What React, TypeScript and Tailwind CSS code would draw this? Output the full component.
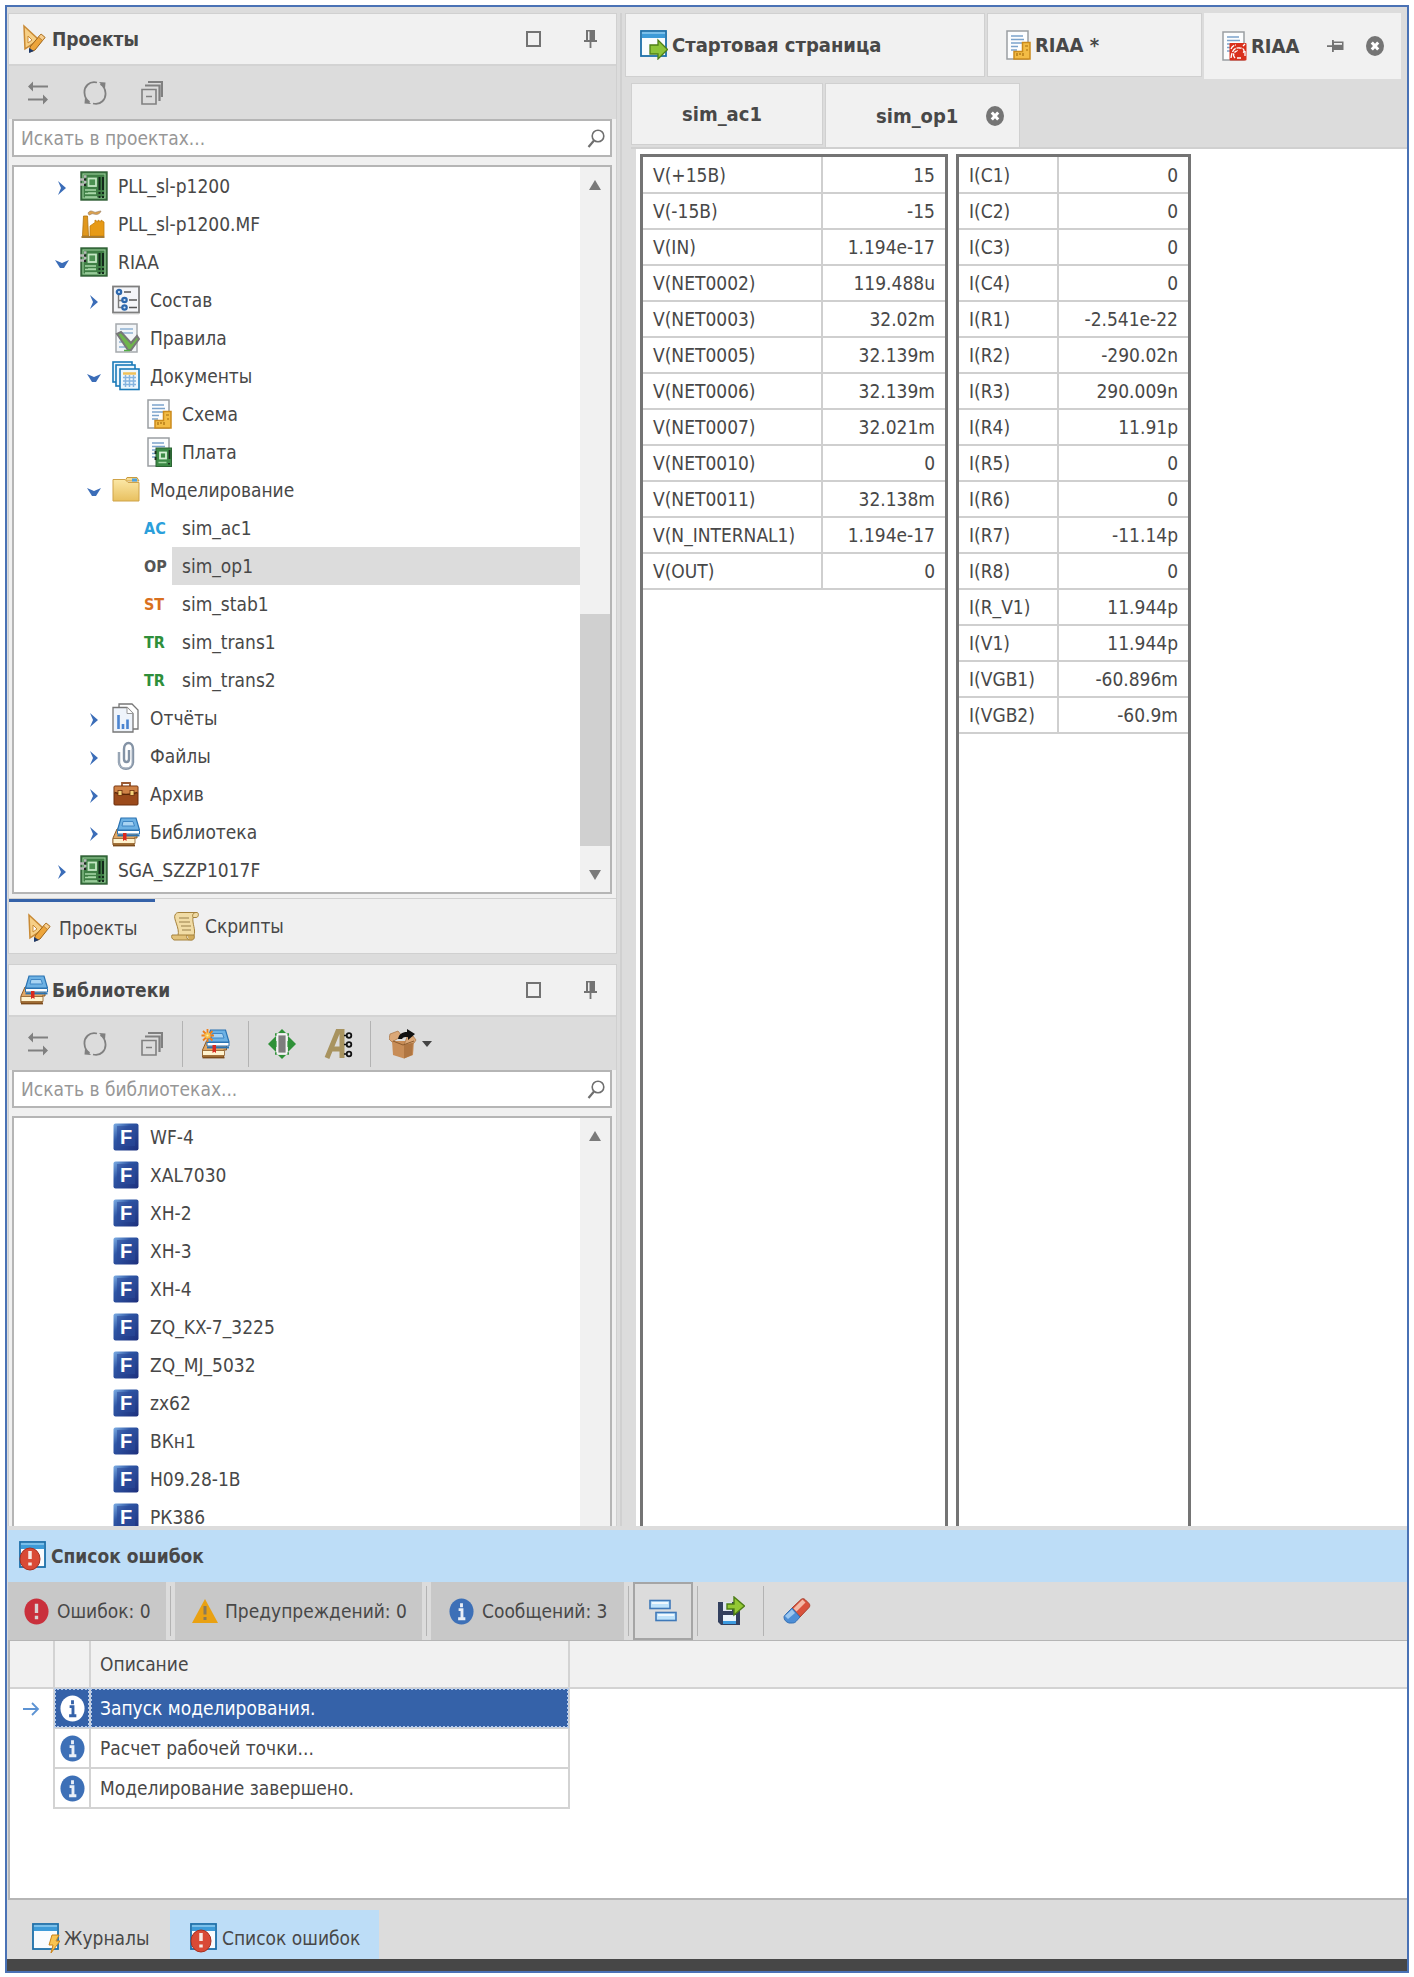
import { useState } from 'react';
import type { ReactNode } from 'react';

type IconProps = { className?: string };

/* ---------- ICONS ---------- */

const BoardIcon = ({ className = 'h-[30px] w-7' }: IconProps) => (
  <svg viewBox="0 0 28 30" className={className} aria-hidden="true">
    <rect x="1" y="1" width="26" height="28" fill="#3f7f45" stroke="#2f5f35" strokeWidth="1.4" />
    <rect x="3" y="3" width="22" height="24" fill="none" stroke="#9fd0a0" strokeWidth="1" />
    <rect x="8.5" y="7.5" width="7.5" height="7.5" fill="#4c9152" stroke="#c4e6c4" strokeWidth="1.8" />
    <path d="M19.5 6v13M23 6v13" stroke="#12281a" strokeWidth="2" />
    <path d="M5 19h11M5 22.5h11M5 26h12M8 22h8" stroke="#a8d8a8" strokeWidth="1.3" />
    <path d="M18.5 22h2M22 22h2M18.5 26h2M22 26h2" stroke="#12281a" strokeWidth="2" />
    <path d="M0 8.5h4.5M0 13.5h4.5M4 5.5h2.500M4 11h2.500" stroke="#b9b9b9" strokeWidth="2.4" />
    <path d="M4 8.500h2M4 14h2" stroke="#222" strokeWidth="2" />
  </svg>
);

const FactoryIcon = () => (
  <svg viewBox="0 0 28 30" className="h-[30px] w-7" aria-hidden="true">
    <path d="M3.500 7h4l1 20h-6z" fill="#e0971d" stroke="#b0730f" strokeWidth=".8" />
    <path d="M10 27V17l5-3.500V11l3 2v-2l3 2v-2l3 2v14z" fill="#e79a16" stroke="#c47d0c" strokeWidth=".8" />
    <path d="M1.500 27h23v2h-23z" fill="#a67b33" />
    <path d="M8 4c2-3 4-2 6-1s4-1 7-1c-1 3-4 4-7 3s-3 1-5 1z" fill="#dfa24b" stroke="#9c8468" strokeWidth=".7" />
  </svg>
);

const StructureIcon = () => (
  <svg viewBox="0 0 28 30" className="h-[30px] w-7" aria-hidden="true">
    <rect x="1" y="1.500" width="26" height="26" fill="#f4f5f8" stroke="#7f7f7f" strokeWidth="1.8" />
    <path d="M1 28.800h26" stroke="#c3c3c3" />
    <path d="M6.500 9v13.500H10M6.500 15.500H10" fill="none" stroke="#7a7a7a" strokeWidth="1.400" />
    <g fill="#cfe3f7" stroke="#2c67ad" strokeWidth="2.200">
      <circle cx="7" cy="7" r="2.200" /><circle cx="12.500" cy="15" r="2.200" /><circle cx="12.500" cy="22.500" r="2.200" />
    </g>
    <path d="M12 7h7M17 15h8M17 22.500h8" stroke="#555" strokeWidth="1.500" />
  </svg>
);

const RulesIcon = () => (
  <svg viewBox="0 0 28 30" className="h-[30px] w-7" aria-hidden="true">
    <rect x="4" y="1" width="21" height="28" fill="#f2f5f8" stroke="#a5a9ad" strokeWidth="1.500" />
    <path d="M8 6h13M8 10h13M7 15h8M7 19h5M7 24h6" stroke="#8fb1d2" strokeWidth="1.700" />
    <path d="M5 11l4-2 10 11 6-7 2 3-8 11h-3z" fill="#6fb64c" stroke="#777" strokeWidth="2" />
    <path d="M12 27.500h6" stroke="#53ad47" strokeWidth="1.500" />
  </svg>
);

const DocumentsIcon = () => (
  <svg viewBox="0 0 28 30" className="h-[30px] w-7" aria-hidden="true">
    <g fill="#eef7fd" stroke="#1b7ab8" strokeWidth="1.600">
      <rect x="1" y="1" width="19" height="20" /><rect x="4" y="4" width="19" height="21" /><rect x="8" y="8" width="19" height="20.500" />
    </g>
    <path d="M11 12.500h13" stroke="#efc15a" strokeWidth="2.500" />
    <path d="M11 16.500h13M11 20h13M11 23.500h13M13.500 14v12M17.500 14v12M21.500 14v12" stroke="#86b4df" strokeWidth="1.500" />
  </svg>
);

// Sheet of paper shared by the schematic, board and simulation documents
const Sheet = ({ children, className = 'h-[30px] w-7' }: { children: ReactNode; className?: string }) => (
  <svg viewBox="0 0 28 30" className={className} aria-hidden="true">
    <rect x="4" y="1" width="21" height="28" fill="#fcfdfe" stroke="#9a9ea2" strokeWidth="1.500" />
    <path d="M8 6h12M8 9.500h13M8 13h12M8 16.500h7M8 20h6" stroke="#7ba3cb" strokeWidth="1.500" />
    {children}
  </svg>
);

const SchemeIcon = ({ className }: IconProps) => (
  <Sheet className={className}>
    <path d="M19.500 12.500H27v16.500H11v-7.500h8.500z" fill="#f3bc45" stroke="#cb8b1c" strokeWidth="1.500" />
    <path d="M14 23v3M17 23v2M20 23v3M25 16h-3M25 20h-2" stroke="#a86e0e" strokeWidth="1.200" />
  </Sheet>
);

const PlateIcon = () => (
  <Sheet>
    <rect x="12" y="11" width="15.500" height="18.500" fill="#3c8a46" stroke="#2c6534" />
    <rect x="16" y="15.500" width="6" height="6" fill="#3c8a46" stroke="#d5efd5" strokeWidth="1.800" />
    <path d="M14.500 25.500h8" stroke="#a4d7a4" strokeWidth="1.500" />
    <path d="M25.500 13v9M11.500 14v3M11.500 20v3M25 26v1.500" stroke="#1c2e20" strokeWidth="1.800" />
  </Sheet>
);

const SimDocIcon = () => (
  <Sheet className="h-8 w-7">
    <rect x="10.500" y="12" width="17" height="17.500" rx="1" fill="#d9301c" />
    <path d="M12 18c1-3 3-4 5-4M12 27c1-8 4-11 9-10 4 0 5 3 3 5M16 27c-3-3-1-7 3-7M24 15l2-2M26 20v6M18 27h4" fill="none" stroke="#fff" strokeWidth="1.300" strokeDasharray="5 1" />
    <circle cx="20" cy="22.500" r="2.800" fill="#d9301c" />
  </Sheet>
);

const FolderIcon = () => (
  <svg viewBox="0 0 28 30" className="h-[30px] w-7" aria-hidden="true">
    <defs>
      <linearGradient id="folder" x1="0" y1="0" x2="0" y2="1">
        <stop offset="0" stopColor="#fbe7a6" /><stop offset="1" stopColor="#e8c05f" />
      </linearGradient>
    </defs>
    <path d="M13 6l2-3.500h10l2 3.500z" fill="#f7dc93" stroke="#c99b3c" />
    <rect x="20" y="3.500" width="5" height="3" fill="#4fa3df" />
    <path d="M1 4.500h12l3 3h11V26H1z" fill="url(#folder)" stroke="#cfa348" />
  </svg>
);

const ReportsIcon = () => (
  <svg viewBox="0 0 28 30" className="h-[30px] w-7" aria-hidden="true">
    <path d="M7 1h13l6 6v19H7z" fill="#fff" stroke="#777" strokeWidth="1.300" />
    <path d="M1 4.500h14l6 6V29H1z" fill="#eff4fb" stroke="#777" strokeWidth="1.300" />
    <path d="M15 4.500v6h6" fill="#fff" stroke="#999" />
    <path d="M6.500 12v14M11 21v5M15.500 16.500V26" stroke="#4b84d0" strokeWidth="2.600" />
  </svg>
);

const ClipIcon = () => (
  <svg viewBox="0 0 28 30" className="h-[30px] w-7" aria-hidden="true" fill="none">
    <path d="M17 9v9c0 4-5 4-5 0V8c0-8 9-8 9 0v13c0 9-14 9-14 0V11" stroke="#8493a5" strokeWidth="2.400" />
    <path d="M7 11v11c0 7 13 7 13 0V8" stroke="#b7c2ce" strokeWidth=".8" />
  </svg>
);

const BriefcaseIcon = () => (
  <svg viewBox="0 0 28 30" className="h-[30px] w-7" aria-hidden="true">
    <path d="M10 7V4h8v3" fill="none" stroke="#9b5b34" strokeWidth="1.800" />
    <rect x="2" y="7" width="24" height="19" rx="1" fill="#9b4a1b" stroke="#6d2f0c" />
    <path d="M2.500 7.500h23V14c-8 3-15 3-23 0z" fill="#cf8246" />
    <path d="M2.500 13.500c7 2.500 16 2.500 23 0" fill="none" stroke="#5b2708" strokeWidth="1.500" />
    <rect x="6" y="11.500" width="4" height="5" fill="#f4d27a" stroke="#6d2f0c" strokeWidth=".8" />
    <rect x="18" y="11.500" width="4" height="5" fill="#f4d27a" stroke="#6d2f0c" strokeWidth=".8" />
  </svg>
);

const BooksIcon = ({ star, className = 'h-[30px] w-7' }: IconProps & { star?: boolean }) => (
  <svg viewBox="0 0 28 30" className={className} aria-hidden="true">
    <path d="M5 12L1 21v7h21v-7h3V12z" fill="#e0a765" stroke="#8d5a24" />
    <path d="M1 21.500h22v5H1z" fill="#fff3cf" stroke="#8d5a24" strokeWidth=".8" />
    <path d="M1 28.500h22" stroke="#7c4b1b" strokeWidth="1.800" />
    <path d="M9 1h15l3.500 12H5.500z" fill="#6db1e3" stroke="#2a73b2" strokeWidth="1.200" />
    <path d="M11 4.500h10l1.500 4.500H10z" fill="#a9d4f3" stroke="#3f86c4" />
    <path d="M5.500 13.500h22v3.500h-22z" fill="#fff" stroke="#2a73b2" />
    <path d="M5.500 18.500h22" stroke="#2a73b2" strokeWidth="1.800" />
    <path d="M11 16h3.500v8l-1.700-1.300L11 24z" fill="#d9291d" />
    {star && (
      <g stroke="#ee7f1a" strokeWidth="1.800">
        <path d="M6 0v13M0 6.500h12.500M1.500 2l9.500 9.500M11 2l-9.500 9.500" />
        <circle cx="6" cy="6.500" r="2" fill="#fff0a8" stroke="#f8c04c" />
      </g>
    )}
  </svg>
);

const DesignIcon = ({ className = 'h-[30px] w-6' }: IconProps) => (
  <svg viewBox="0 0 24 28" className={className} aria-hidden="true">
    <path d="M2 1l15 14-14 9z" fill="#f6cf86" stroke="#c98a35" strokeWidth="1.500" />
    <path d="M6 11l4 4-4 3z" fill="#fff" stroke="#c98a35" />
    <path d="M19 9l4 3.500-10 12.500-5 2v-5z" fill="#eda53b" stroke="#9d6419" />
    <path d="M19 9l4 3.500-2.500 3-4-3.500z" fill="#f8cf90" stroke="#b0782f" strokeWidth=".8" />
    <path d="M7 23l5 3-5 2z" fill="#1e3a6b" />
  </svg>
);

const ScrollIcon = () => (
  <svg viewBox="0 0 28 30" className="h-[30px] w-7" aria-hidden="true">
    <path d="M8 1.500h18c2 0 2 5-1 5h-3c-1 6 3 12 1 18H7C9 17 2 8 4 4c1-2 2-2.500 4-2.500z" fill="#f1dca5" stroke="#a5823c" />
    <path d="M22 6.500c-1-2 0-5 3-5" fill="none" stroke="#a5823c" />
    <path d="M1 24h15c-1 2 0 4 2 5H3c-2-1-3-3-2-5z" fill="#e2c27a" stroke="#a5823c" />
    <path d="M18 29c5 1 6-2 5-5h-7" fill="#d2ac5c" stroke="#a5823c" />
    <path d="M8 7h10M8 11h11M10 15h10M11 19h9" stroke="#b79f69" strokeWidth="1.400" />
  </svg>
);

const SwapIcon = () => (
  <svg viewBox="0 0 22 24" className="h-6 w-[22px]" aria-hidden="true" fill="none" stroke="#808080" strokeWidth="2">
    <path d="M21 5.500H3M1 18.500h18" />
    <path d="M6 .5L1 5.500l5 5zM16 13.500l5 5-5 5z" fill="#808080" stroke="none" />
  </svg>
);

const RefreshIcon = () => (
  <svg viewBox="0 0 24 24" className="h-6 w-6" aria-hidden="true" fill="none" stroke="#808080" strokeWidth="1.800">
    <path d="M14 1.500C6-.5 1 6 1.500 12c.2 4 2 7 5 9M10 22.500c8 2 13-4.500 12.500-10.500-.2-4-2-7-5-9" />
    <path d="M16 1l6.500.5-.5 6zM8 23l-6.500-.5.5-6z" fill="#808080" stroke="none" />
  </svg>
);

const CollapseIcon = () => (
  <svg viewBox="0 0 22 24" className="h-6 w-[22px]" aria-hidden="true" fill="none" stroke="#808080" strokeWidth="1.600">
    <path d="M7 1h14v15M4 4.500h14.500V20" strokeWidth="2.200" />
    <path d="M1 8.500h14V23H1zM5 15.500h6" />
  </svg>
);

const PinIcon = () => (
  <svg viewBox="0 0 13 18" className="h-[18px] w-[13px]" aria-hidden="true">
    <path d="M2 0h9v10H13v2H7.400v6H5.600v-6H0v-2h2z" fill="#737373" />
    <path d="M4 1.500h1.500v8.500H4z" fill="#f1f1f1" />
  </svg>
);

const SidePinIcon = () => (
  <svg viewBox="0 0 17 12" className="h-3 w-[17px]" aria-hidden="true">
    <path d="M5 0h1.800v1.500H16.500v8.500H6.800V12H5V7H0V5.300h5z" fill="#737373" />
    <path d="M7 3h8v1.800H7z" fill="#f1f1f1" />
  </svg>
);

const CloseIcon = () => (
  <svg viewBox="0 0 18 20" className="h-5 w-[18px]" aria-hidden="true">
    <ellipse cx="9" cy="10" rx="9" ry="10" fill="#757575" />
    <path d="M5.800 6.500l6.400 7M12.200 6.500l-6.400 7" stroke="#fff" strokeWidth="3" />
  </svg>
);

const SearchIcon = () => (
  <svg viewBox="0 0 18 19" className="h-[19px] w-[18px]" aria-hidden="true" fill="none" stroke="#6f6f6f">
    <circle cx="11" cy="7" r="5.800" strokeWidth="1.600" />
    <path d="M7 11.500L1.500 18" strokeWidth="2.200" />
  </svg>
);

const MoveIcon = () => (
  <svg viewBox="0 0 28 30" className="h-[30px] w-7" aria-hidden="true">
    <path d="M14 0l4 4h-8zM14 30l4-4h-8zM0 15l8-8v5h2v6H8v5zM28 15l-8-8v5h-2v6h2v5z" fill="#2f9138" />
    <path d="M7 5.500h2.500M18.500 5.500H21M7 24.500h2.500M18.500 24.500H21" stroke="#2f9138" strokeWidth="2.500" />
    <rect x="9.500" y="5.500" width="9" height="19" fill="#7d7d7d" stroke="#f4f4f4" strokeWidth="1.800" />
  </svg>
);

const PinsLetterIcon = () => (
  <svg viewBox="0 0 29 30" className="h-[30px] w-[29px]" aria-hidden="true" fill="none">
    <path d="M3 29L14 2h4v27M8 20h9" stroke="#a8935f" strokeWidth="5" />
    <path d="M20 6.500h5M20 15.500h5M20 25h5" stroke="#111" strokeWidth="1.600" />
    <g fill="#ddd" stroke="#111" strokeWidth="1.800"><circle cx="25" cy="6.500" r="2.300" /><circle cx="25" cy="15.500" r="2.300" /><circle cx="25" cy="25" r="2.300" /></g>
  </svg>
);

const BoxIcon = () => (
  <svg viewBox="0 0 28 30" className="h-[30px] w-7" aria-hidden="true">
    <path d="M3 12h22l-1 14-9 3.500L4 26z" fill="#c88d57" />
    <path d="M15 15l9-2-1 13-8 3.500z" fill="#b07642" />
    <path d="M1 5l8-3 4 5-10 6-3-3zM18 8l6-1 3 4-2 3-10 2z" fill="#dba878" stroke="#a8713f" strokeWidth=".7" />
    <path d="M4 12l10 4 11-4" fill="none" stroke="#8d5c2f" />
    <path d="M9 10c1-5 4-7 9-7V0l8 5-7 6V8c-3 0-5 0-6 2z" fill="#111" />
  </svg>
);

const FootprintIcon = () => (
  <svg viewBox="0 0 28 30" className="h-[30px] w-7" aria-hidden="true">
    <defs>
      <linearGradient id="fp" x1="0" y1="0" x2="1" y2="1">
        <stop offset="0" stopColor="#7fb0e6" /><stop offset=".35" stopColor="#2f57a6" /><stop offset="1" stopColor="#1d2f7c" />
      </linearGradient>
    </defs>
    <rect x="1.500" y="1.500" width="25" height="27" rx="2" fill="url(#fp)" />
    <path d="M5 4h18v20H5z" fill="#2b4b9b" opacity=".55" />
    <text x="14" y="22" textAnchor="middle" fontSize="20" fontWeight="700" fill="#fff" fontFamily="Liberation Sans">F</text>
  </svg>
);

// Small application window with an overlay in its corner
const WindowBase = ({ children }: { children: ReactNode }) => (
  <svg viewBox="0 0 28 30" className="h-[30px] w-7" aria-hidden="true">
    <rect x="1" y="1" width="25" height="25" fill="#f9fcfe" stroke="#1c6fa9" strokeWidth="1.800" />
    <path d="M2 2h23v6H2z" fill="#3d9bd8" />
    <path d="M2 3h23" stroke="#8fcbf0" strokeWidth="1.500" />
    {children}
  </svg>
);

const StartPageIcon = () => (
  <WindowBase>
    <path d="M10 15h8v-5l9.500 9.500L18 29v-5h-8z" fill="#8cc43a" stroke="#4d7f17" strokeWidth="1.300" />
  </WindowBase>
);

const ErrorListIcon = () => (
  <WindowBase>
    <ellipse cx="11" cy="18" rx="10" ry="11" fill="#d94a36" stroke="#a72f20" />
    <path d="M11 10v8M11 21.500v3" stroke="#f6e9e4" strokeWidth="3.500" />
  </WindowBase>
);

const JournalIcon = () => (
  <WindowBase>
    <path d="M20 12h7l-3 6h4l-9 12 2-8h-4z" fill="#f8c451" stroke="#c98219" />
  </WindowBase>
);

const ErrorIcon = () => (
  <svg viewBox="0 0 26 28" className="h-[27px] w-[25px]" aria-hidden="true">
    <ellipse cx="13" cy="14" rx="12.500" ry="13.500" fill="#c9303c" />
    <path d="M13 6v9.500M13 18.500v3.500" stroke="#d8d2d2" strokeWidth="3.500" />
  </svg>
);

const WarningIcon = () => (
  <svg viewBox="0 0 26 24" className="h-6 w-[26px]" aria-hidden="true">
    <path d="M13 0l13 24H0z" fill="#e9a112" />
    <path d="M13 7v8.500M13 18v3" stroke="#8a7a58" strokeWidth="3" />
  </svg>
);

const InfoIcon = ({ inverted }: { inverted?: boolean }) => (
  <svg viewBox="0 0 26 28" className="h-[27px] w-[25px]" aria-hidden="true">
    <ellipse cx="13" cy="14" rx="12.500" ry="13.500" fill={inverted ? '#fff' : '#3d70b7'} />
    <path d="M13 5.500v4M10 12h3.500v9M9.500 21.500h7.500" stroke={inverted ? '#3562a9' : '#e9eff7'} strokeWidth="3" fill="none" />
  </svg>
);

const GroupIcon = () => (
  <svg viewBox="0 0 28 24" className="h-6 w-7" aria-hidden="true">
    <g fill="#bfe3fb" stroke="#3f79b9" strokeWidth="1.600">
      <rect x="1" y="1.500" width="20" height="8" /><rect x="7" y="13.500" width="20" height="8" />
    </g>
    <path d="M3 4h16M9 16h16" stroke="#fff" strokeWidth="1.500" />
  </svg>
);

const ExportIcon = () => (
  <svg viewBox="0 0 28 30" className="h-[30px] w-7" aria-hidden="true">
    <path d="M1 6h22v23H4l-3-3z" fill="#33405f" />
    <rect x="6" y="6" width="9" height="9" fill="#dfe6f0" />
    <rect x="6" y="19" width="13" height="9" fill="#eaf3fb" />
    <path d="M6 26.500h13" stroke="#3d9be0" strokeWidth="3" />
    <path d="M10 8h7V1l10.500 9L17 19v-6h-7z" fill="#93c834" stroke="#4c7d15" strokeWidth="1.400" />
  </svg>
);

const EraserIcon = () => (
  <svg viewBox="0 0 28 28" className="h-7 w-7" aria-hidden="true">
    <path d="M9 11L18 2.500c1-1 3-1 4 0l4 4c1 1 1 3 0 4L17 20z" fill="#d9523c" stroke="#a8402e" />
    <path d="M10.500 11.500l9-9 3 3-9 9z" fill="#f3b9a6" />
    <path d="M9 11l8 9-4 4.500c-1 1-2 1.500-3.500 1.500H6c-3-1-5-3-5-6 0-1 1-2 2-3z" fill="#4d8ed6" stroke="#356fb3" />
    <path d="M9 12.500l3 3.500-7 6-3-3z" fill="#9cc7ef" />
  </svg>
);

/* ---------- DATA ---------- */

type TreeNode = { name: string; level: 0 | 1 | 2; icon: ReactNode; state?: 'open' | 'closed' };

const SimTag = ({ text, color }: { text: string; color: string }) => (
  <span className={`text-base font-bold ${color}`}>{text}</span>
);

const projectTree: TreeNode[] = [
  { name: 'PLL_sl-p1200', level: 0, icon: <BoardIcon />, state: 'closed' },
  { name: 'PLL_sl-p1200.MF', level: 0, icon: <FactoryIcon /> },
  { name: 'RIAA', level: 0, icon: <BoardIcon />, state: 'open' },
  { name: 'Состав', level: 1, icon: <StructureIcon />, state: 'closed' },
  { name: 'Правила', level: 1, icon: <RulesIcon /> },
  { name: 'Документы', level: 1, icon: <DocumentsIcon />, state: 'open' },
  { name: 'Схема', level: 2, icon: <SchemeIcon /> },
  { name: 'Плата', level: 2, icon: <PlateIcon /> },
  { name: 'Моделирование', level: 1, icon: <FolderIcon />, state: 'open' },
  { name: 'sim_ac1', level: 2, icon: <SimTag text="AC" color="text-[#2b9fdb]" /> },
  { name: 'sim_op1', level: 2, icon: <SimTag text="OP" color="text-[#555555]" /> },
  { name: 'sim_stab1', level: 2, icon: <SimTag text="ST" color="text-[#d9701e]" /> },
  { name: 'sim_trans1', level: 2, icon: <SimTag text="TR" color="text-[#2f8f3a]" /> },
  { name: 'sim_trans2', level: 2, icon: <SimTag text="TR" color="text-[#2f8f3a]" /> },
  { name: 'Отчёты', level: 1, icon: <ReportsIcon />, state: 'closed' },
  { name: 'Файлы', level: 1, icon: <ClipIcon />, state: 'closed' },
  { name: 'Архив', level: 1, icon: <BriefcaseIcon />, state: 'closed' },
  { name: 'Библиотека', level: 1, icon: <BooksIcon />, state: 'closed' },
  { name: 'SGA_SZZP1017F', level: 0, icon: <BoardIcon />, state: 'closed' },
];

const footprints = ['WF-4', 'XAL7030', 'XH-2', 'XH-3', 'XH-4', 'ZQ_KX-7_3225', 'ZQ_MJ_5032', 'zx62', 'ВКн1', 'Н09.28-1В', 'РК386'];

const voltages = [
  ['V(+15В)', '15'],
  ['V(-15В)', '-15'],
  ['V(IN)', '1.194e-17'],
  ['V(NET0002)', '119.488u'],
  ['V(NET0003)', '32.02m'],
  ['V(NET0005)', '32.139m'],
  ['V(NET0006)', '32.139m'],
  ['V(NET0007)', '32.021m'],
  ['V(NET0010)', '0'],
  ['V(NET0011)', '32.138m'],
  ['V(N_INTERNAL1)', '1.194e-17'],
  ['V(OUT)', '0'],
];

const currents = [
  ['I(C1)', '0'],
  ['I(C2)', '0'],
  ['I(C3)', '0'],
  ['I(C4)', '0'],
  ['I(R1)', '-2.541e-22'],
  ['I(R2)', '-290.02n'],
  ['I(R3)', '290.009n'],
  ['I(R4)', '11.91p'],
  ['I(R5)', '0'],
  ['I(R6)', '0'],
  ['I(R7)', '-11.14p'],
  ['I(R8)', '0'],
  ['I(R_V1)', '11.944p'],
  ['I(V1)', '11.944p'],
  ['I(VGB1)', '-60.896m'],
  ['I(VGB2)', '-60.9m'],
];

const messages = ['Запуск моделирования.', 'Расчет рабочей точки...', 'Моделирование завершено.'];

const indents = ['pl-8', 'pl-16', 'pl-24'];

/* ---------- PARTS ---------- */

const Chevron = ({ open }: { open: boolean }) => (
  <svg viewBox="0 0 14 14" className="h-3.5 w-3.5" aria-hidden="true">
    <path d={open ? 'M0 3l7 3 7-3-5 8H5z' : 'M3 0l8 7-8 7 3-7z'} fill="#3b6db8" />
  </svg>
);

function PanelHeader({ icon, title }: { icon: ReactNode; title: string }) {
  return (
    <header className="flex h-[52px] shrink-0 items-center border-b-2 border-[#d3d3d3] bg-[#f1f1f1] pr-[19px] pl-[11px]">
      <span className="flex w-7 justify-center">{icon}</span>
      <h2 className="ml-1 flex-1 font-bold">{title}</h2>
      <button aria-label="Развернуть" className="mr-[43px] h-4 w-[15px] border-2 border-[#737373]" />
      <button aria-label="Закрепить">
        <PinIcon />
      </button>
    </header>
  );
}

function ToolButton({ label, children }: { label: string; children: ReactNode }) {
  return (
    <button aria-label={label} className="flex h-full w-[57px] items-center justify-center">
      {children}
    </button>
  );
}

function CommonTools() {
  return (
    <>
      <ToolButton label="Синхронизировать"><SwapIcon /></ToolButton>
      <ToolButton label="Обновить"><RefreshIcon /></ToolButton>
      <ToolButton label="Свернуть все"><CollapseIcon /></ToolButton>
    </>
  );
}

const Divider = () => <span className="h-[46px] w-px shrink-0 bg-[#b3b3b3]" />;

function SearchBox({ placeholder }: { placeholder: string }) {
  return (
    <label className="mr-1 ml-[3px] flex h-[38px] shrink-0 items-center border-2 border-[#b5b5b5] bg-white pr-[5px] pl-[7px]">
      <input
        type="text"
        aria-label={placeholder}
        placeholder={placeholder}
        className="min-w-0 flex-1 bg-transparent outline-none placeholder:text-[#979797]"
      />
      <SearchIcon />
    </label>
  );
}

const Arrow = ({ down }: { down?: boolean }) => (
  <svg viewBox="0 0 12 10" className="h-2.5 w-3" aria-hidden="true">
    <path d={down ? 'M0 0h12L6 10z' : 'M6 0l6 10H0z'} fill="#7a7a7a" />
  </svg>
);

function ResultTable({ rows, caption, nameWidth, valueWidth }: { rows: string[][]; caption: string; nameWidth: string; valueWidth: string }) {
  return (
    <div className="border-[3px] border-b-0 border-[#747474]">
      <table aria-label={caption} className="border-collapse">
        <tbody>
          {rows.map(([name, value]) => (
            <tr key={name} className="h-9 border-b-2 border-[#cfcfcf]">
              <td className={`border-r-2 border-[#cfcfcf] p-0 pl-2.5 ${nameWidth}`}>{name}</td>
              <td className={`p-0 pr-2.5 text-right ${valueWidth}`}>{value}</td>
            </tr>
          ))}
        </tbody>
      </table>
    </div>
  );
}

/* ---------- PANELS ---------- */

function ProjectsPanel() {
  const [selected, setSelected] = useState('sim_op1');

  return (
    <section className="flex shrink-0 flex-col border border-[#d0d0d0] bg-[#f0f0f0]">
      <PanelHeader icon={<DesignIcon />} title="Проекты" />
      <div className="flex h-[53px] shrink-0 items-center bg-[#dcdcdc]">
        <CommonTools />
      </div>
      <SearchBox placeholder="Искать в проектах..." />

      <div className="mt-2 mr-1 ml-[3px] flex border-2 border-[#b5b5b5] bg-white">
        <ul className="min-w-0 flex-1 pb-[3px]">
          {projectTree.map((node) => (
            <li key={node.name} className={`flex h-[38px] items-center ${indents[node.level]}`}>
              <span className="mr-0.5 flex w-8 justify-center pt-1">
                {node.state && <Chevron open={node.state === 'open'} />}
              </span>
              <span className="w-7 shrink-0">{node.icon}</span>
              <button
                onClick={() => setSelected(node.name)}
                className={`h-full flex-1 pl-2.5 text-left ${selected === node.name ? 'bg-[#dcdcdc]' : ''}`}
              >
                {node.name}
              </button>
            </li>
          ))}
        </ul>
        <div className="flex w-[30px] flex-col items-center bg-[#f1f1f1]">
          <div className="flex h-9 shrink-0 items-center"><Arrow /></div>
          <div className="flex-[410]" />
          <div className="w-full flex-[232] bg-[#d0d0d0]" />
          <div className="flex h-[46px] shrink-0 items-center pt-3"><Arrow down /></div>
        </div>
      </div>

      <nav className="mt-1 flex h-[55px] border-t border-[#d0d0d0]">
        <button className="flex w-[146px] items-center border-t-[3px] border-[#3562a9] pl-[18px]">
          <DesignIcon />
          <span className="ml-2">Проекты</span>
        </button>
        <button className="flex items-center pl-4">
          <ScrollIcon />
          <span className="ml-1.5">Скрипты</span>
        </button>
      </nav>
    </section>
  );
}

function LibrariesPanel() {
  return (
    <section className="mt-2.5 flex min-h-0 flex-1 flex-col border border-b-0 border-[#d0d0d0] bg-[#f0f0f0]">
      <PanelHeader icon={<BooksIcon />} title="Библиотеки" />
      <div className="flex h-[53px] shrink-0 items-center bg-[#dcdcdc]">
        <CommonTools />
        <span className="w-0.5" />
        <Divider />
        <span className="w-1" />
        <ToolButton label="Новая библиотека"><BooksIcon star className="h-[30px] w-[29px]" /></ToolButton>
        <span className="w-1" />
        <Divider />
        <span className="w-1" />
        <ToolButton label="Посадочные места"><MoveIcon /></ToolButton>
        <ToolButton label="Символы"><PinsLetterIcon /></ToolButton>
        <span className="w-[3px]" />
        <Divider />
        <button aria-label="Экспорт" className="flex h-full items-center gap-[5px] pl-[18px]">
          <BoxIcon />
          <svg viewBox="0 0 10 6" className="h-1.5 w-2.5" aria-hidden="true"><path d="M0 0h10L5 6z" fill="#444" /></svg>
        </button>
      </div>
      <SearchBox placeholder="Искать в библиотеках..." />

      <div className="mt-2 mr-1 ml-[3px] flex min-h-0 flex-1 overflow-hidden border-2 border-b-0 border-[#b5b5b5] bg-white">
        <ul className="min-w-0 flex-1">
          {footprints.map((name) => (
            <li key={name} className="flex h-[38px] items-center pl-[98px]">
              <FootprintIcon />
              <span className="pl-2.5">{name}</span>
            </li>
          ))}
        </ul>
        <div className="flex w-[30px] flex-col items-center bg-[#f1f1f1]">
          <div className="flex h-9 shrink-0 items-center"><Arrow /></div>
        </div>
      </div>
    </section>
  );
}

function Editor() {
  return (
    <main className="flex min-h-0 min-w-0 flex-1 flex-col">
      {/* DOCUMENT TABS */}
      <div className="flex h-[66px] shrink-0 items-start gap-0.5 text-xl font-bold">
        <button className="flex h-16 w-[360px] items-center border border-[#d0d0d0] bg-[#f1f1f1] pl-3.5">
          <StartPageIcon />
          <span className="ml-1">Стартовая страница</span>
        </button>
        <button className="flex h-16 w-[215px] items-center border border-[#d0d0d0] bg-[#f1f1f1] pl-[15px]">
          <SchemeIcon className="h-8 w-7" />
          <span className="ml-1">RIAA *</span>
        </button>
        <div className="flex h-[66px] w-[197px] items-center bg-[#f1f1f1] pl-[15px]">
          <SimDocIcon />
          <span className="ml-1 flex-1">RIAA</span>
          <button aria-label="Закрепить вкладку"><SidePinIcon /></button>
          <button aria-label="Закрыть вкладку" className="mr-[17px] ml-[22px]"><CloseIcon /></button>
        </div>
      </div>

      {/* SIMULATION TABS */}
      <div className="ml-1.5 flex h-[68px] shrink-0 items-start gap-0.5 pt-1 text-xl font-bold">
        <button className="h-[62px] w-[192px] border border-[#d0d0d0] bg-[#f1f1f1] pl-[50px] text-left">sim_ac1</button>
        <div className="flex h-16 w-[195px] items-center border border-b-0 border-[#d0d0d0] bg-[#f1f1f1] pl-[50px]">
          <span className="flex-1">sim_op1</span>
          <button aria-label="Закрыть расчёт" className="mr-[15px]"><CloseIcon /></button>
        </div>
      </div>
      <div className="ml-1.5 h-0.5 shrink-0 bg-[#d0d0d0]" />

      <div className="ml-[11px] flex min-h-0 flex-1 gap-2 overflow-hidden bg-white pt-[5px] pl-1">
        <ResultTable rows={voltages} caption="Напряжения" nameWidth="w-[179px]" valueWidth="w-[123px]" />
        <ResultTable rows={currents} caption="Токи" nameWidth="w-[99px]" valueWidth="w-[130px]" />
      </div>
    </main>
  );
}

function ErrorsPanel() {
  const [active, setActive] = useState(0);

  return (
    <section className="flex shrink-0 flex-col">
      <header className="mt-1 flex h-[52px] items-center bg-[#bdddf7] pl-[11px]">
        <ErrorListIcon />
        <h2 className="ml-1 font-bold">Список ошибок</h2>
      </header>

      <div className="flex h-[58px] items-center">
        <button className="flex h-full w-[158px] items-center bg-[#c8c8c8] pl-4">
          <ErrorIcon />
          <span className="ml-2">Ошибок: 0</span>
        </button>
        <span className="mx-1 h-[50px] w-px bg-[#b3b3b3]" />
        <button className="flex h-full w-[247px] items-center bg-[#c8c8c8] pl-[17px]">
          <WarningIcon />
          <span className="ml-[7px]">Предупреждений: 0</span>
        </button>
        <span className="mx-1 h-[50px] w-px bg-[#b3b3b3]" />
        <button className="flex h-full w-[193px] items-center bg-[#c8c8c8] pl-[18px]">
          <InfoIcon />
          <span className="ml-2">Сообщений: 3</span>
        </button>
        <span className="mx-1 h-[50px] w-px bg-[#b3b3b3]" />
        <button aria-label="Группировать" className="flex h-full w-[60px] items-center justify-center border-2 border-[#a5a5a5]">
          <GroupIcon />
        </button>
        <span className="mx-1 h-[50px] w-px bg-[#b3b3b3]" />
        <button aria-label="Экспорт" className="flex h-full w-[57px] items-center justify-center"><ExportIcon /></button>
        <span className="mx-1 h-[50px] w-px bg-[#b3b3b3]" />
        <button aria-label="Очистить" className="flex h-full w-[57px] items-center justify-center"><EraserIcon /></button>
      </div>

      <div className="h-[260px] overflow-hidden border-t border-b-2 border-l-2 border-[#b5b5b5] bg-white">
        <table className="w-full border-collapse text-left">
          <thead>
            <tr className="h-[47px] border-b-2 border-[#d3d3d3] bg-[#f1f1f1]">
              <th className="w-11 border-r-2 border-[#d3d3d3] p-0" />
              <th className="w-9 border-r-2 border-[#d3d3d3] p-0" />
              <th className="w-[479px] border-r-2 border-[#d3d3d3] p-0 pl-[9px] font-normal">Описание</th>
              <th className="p-0" />
            </tr>
          </thead>
          <tbody>
            {messages.map((message, i) => {
              const isActive = i === active;

              return (
                <tr key={message} onClick={() => setActive(i)} className="h-10">
                  <td className="border-r-2 border-[#d3d3d3] p-0 pl-[13px]">
                    {isActive && (
                      <svg viewBox="0 0 17 14" className="h-3.5 w-[17px]" aria-hidden="true" fill="none" stroke="#5d93d3" strokeWidth="1.800">
                        <path d="M0 7h15M9 1l6 6-6 6" />
                      </svg>
                    )}
                  </td>
                  <td className={`border-r-2 border-b-2 border-[#d3d3d3] p-0 ${isActive ? 'bg-[#3562a9] outline-2 -outline-offset-2 outline-dotted outline-[#b9cdea]' : ''}`}>
                    <span className="flex justify-center"><InfoIcon inverted={isActive} /></span>
                  </td>
                  <td className={`border-r-2 border-b-2 border-[#d3d3d3] p-0 pl-[9px] ${isActive ? 'bg-[#3562a9] text-white outline-2 -outline-offset-2 outline-dotted outline-[#b9cdea]' : ''}`}>
                    {message}
                  </td>
                  <td className="p-0" />
                </tr>
              );
            })}
          </tbody>
        </table>
      </div>

      <nav className="flex h-[59px] items-end">
        <button className="flex h-[49px] w-[162px] items-center pt-1.5 pl-6">
          <JournalIcon />
          <span className="ml-1">Журналы</span>
        </button>
        <button className="flex h-[49px] w-[209px] items-center bg-[#bdddf7] pt-1.5 pl-5">
          <ErrorListIcon />
          <span className="ml-1">Список ошибок</span>
        </button>
      </nav>
    </section>
  );
}

export default function App() {
  return (
    <div className="h-screen bg-white px-[5px] pt-[5px] pb-1 font-['DejaVu_Sans_Condensed','DejaVu_Sans',sans-serif] text-[19px] leading-6 whitespace-nowrap text-[#484848]">
      <div className="flex h-full flex-col overflow-hidden border-2 border-[#4a72b5] bg-[#dcdcdc]">
        <div className="flex min-h-0 flex-1 flex-col pt-1.5 pl-px">
          <div className="flex min-h-0 flex-1">
            <div className="flex w-[609px] shrink-0 flex-col">
              <ProjectsPanel />
              <LibrariesPanel />
            </div>
            <div className="mx-[3px] w-0.5 shrink-0 bg-[#d0d0d0]" />
            <Editor />
          </div>
          <ErrorsPanel />
        </div>
        <div className="h-3 shrink-0 bg-[#474747]" />
      </div>
    </div>
  );
}
